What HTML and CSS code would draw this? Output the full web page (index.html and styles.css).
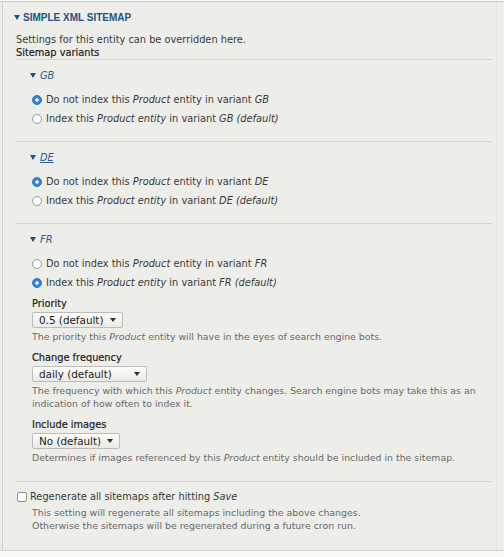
FILE: index.html
```html
<!DOCTYPE html>
<html lang="en">
<head>
<meta charset="utf-8">
<title>Simple XML Sitemap</title>
<link rel="stylesheet" href="styles.css">
</head>
<body>
<div class="frame">
  <div class="details">
    <div class="summary">
      <svg class="tri" width="6" height="5" viewBox="0 0 6 5"><path d="M0 0H6L3 5Z"/></svg>
      <span>SIMPLE XML SITEMAP</span>
    </div>
    <div class="content">
      <p class="intro">Settings for this entity can be overridden here.</p>
      <div class="legend">Sitemap variants</div>

      <div class="variant">
        <div class="vhead">
          <svg class="tri" width="6" height="5" viewBox="0 0 6 5"><path d="M0 0H6L3 5Z"/></svg>
          <em>GB</em>
        </div>
        <div class="options">
          <label class="opt"><input type="radio" name="gb" checked><span>Do not index this <em>Product</em> entity in variant <em>GB</em></span></label>
          <label class="opt"><input type="radio" name="gb"><span>Index this <em>Product entity</em> in variant <em>GB (default)</em></span></label>
        </div>
      </div>

      <div class="variant">
        <div class="vhead">
          <svg class="tri" width="6" height="5" viewBox="0 0 6 5"><path d="M0 0H6L3 5Z"/></svg>
          <em class="focus">DE</em>
        </div>
        <div class="options">
          <label class="opt"><input type="radio" name="de" checked><span>Do not index this <em>Product</em> entity in variant <em>DE</em></span></label>
          <label class="opt"><input type="radio" name="de"><span>Index this <em>Product entity</em> in variant <em>DE (default)</em></span></label>
        </div>
      </div>

      <div class="variant last">
        <div class="vhead">
          <svg class="tri" width="6" height="5" viewBox="0 0 6 5"><path d="M0 0H6L3 5Z"/></svg>
          <em>FR</em>
        </div>
        <div class="options">
          <label class="opt"><input type="radio" name="fr"><span>Do not index this <em>Product</em> entity in variant <em>FR</em></span></label>
          <label class="opt"><input type="radio" name="fr" checked><span>Index this <em>Product entity</em> in variant <em>FR (default)</em></span></label>
        </div>

        <div class="field">
          <div class="flabel">Priority</div>
          <div class="select w-priority"><span>0.5 (default)</span><svg class="arrow" width="6" height="4" viewBox="0 0 6 4"><path d="M0 0H6L3 4Z"/></svg></div>
          <div class="desc">The priority this <em>Product</em> entity will have in the eyes of search engine bots.</div>
        </div>

        <div class="field">
          <div class="flabel">Change frequency</div>
          <div class="select w-freq"><span>daily (default)</span><svg class="arrow" width="6" height="4" viewBox="0 0 6 4"><path d="M0 0H6L3 4Z"/></svg></div>
          <div class="desc">The frequency with which this <em>Product</em> entity changes. Search engine bots may take this as an<br>indication of how often to index it.</div>
        </div>

        <div class="field">
          <div class="flabel">Include images</div>
          <div class="select w-img"><span>No (default)</span><svg class="arrow" width="6" height="4" viewBox="0 0 6 4"><path d="M0 0H6L3 4Z"/></svg></div>
          <div class="desc">Determines if images referenced by this <em>Product</em> entity should be included in the sitemap.</div>
        </div>
      </div>

      <div class="regen">
        <label class="check"><input type="checkbox"><span>Regenerate all sitemaps after hitting <em>Save</em></span></label>
        <div class="desc regen-desc">This setting will regenerate all sitemaps including the above changes.<br>Otherwise the sitemaps will be regenerated during a future cron run.</div>
      </div>
    </div>
  </div>
</div>
</body>
</html>
```

FILE: styles.css
```css
html, body {
  margin: 0;
  padding: 0;
}

body {
  background: #fafaf9;
  font-family: "DejaVu Sans", "Liberation Sans", sans-serif;
  font-size: 9.8px;
  line-height: 13px;
  color: #3a3a3a;
}

.frame {
  margin-top: 1px;
  background: #edede9;
  border-top: 1px solid #cacac6;
  border-bottom: 1px solid #d2d2ce;
  padding-left: 2px;
}

.details {
  border-left: 1px solid #d0d0cc;
  border-right: 1px solid #e2e2de;
  margin-right: 7px;
  padding-bottom: 18px;
}

.summary {
  display: flex;
  align-items: center;
  height: 14px;
  padding: 8px 0 9px 11px;
  color: #1f5286;
  font-family: "Liberation Sans", "DejaVu Sans", sans-serif;
  font-size: 10px;
  font-weight: bold;
}

.tri {
  fill: #1f5286;
  flex: none;
}

.summary .tri {
  margin-right: 3px;
}

.content {
  padding: 0 4px 0 13px;
}

.intro {
  margin: 0;
}

.legend {
  color: #222;
  -webkit-text-stroke: 0.2px #222;
  border-bottom: 1px solid #d3d3cf;
}

.variant {
  padding: 9px 0 13px 14px;
  border-bottom: 1px solid #d3d3cf;
}

.variant.last {
  padding-bottom: 17px;
}

.vhead {
  display: flex;
  align-items: center;
  color: #2a5d8f;
}

.vhead .tri {
  margin-right: 4px;
}

.vhead em {
  font-style: italic;
}

.vhead .focus {
  text-decoration: underline;
}

.options {
  margin-top: 8px;
}

.opt {
  display: flex;
  align-items: center;
  height: 19px;
  padding-left: 2px;
}

.opt em, .check em, .desc em {
  font-style: italic;
}

input[type="radio"] {
  -webkit-appearance: none;
  appearance: none;
  width: 10px;
  height: 10px;
  margin: 0 4px 0 0;
  border: 1px solid #9c9c9c;
  border-radius: 50%;
  background: #fff;
  box-sizing: border-box;
  flex: none;
}

input[type="radio"]:checked {
  border-color: #2b6fc4;
  background: radial-gradient(circle, #ffffff 0 1.4px, #2f82de 2px);
}

.field {
  padding-left: 2px;
}

.flabel {
  margin-top: 5px;
  color: #222;
  -webkit-text-stroke: 0.2px #222;
}

.field + .field .flabel {
  margin-top: 8px;
}

.select {
  display: flex;
  align-items: center;
  justify-content: space-between;
  box-sizing: border-box;
  height: 16px;
  margin-top: 2px;
  padding: 0 6px 0 6px;
  border: 1px solid #bcbcb8;
  border-radius: 2px;
  background: linear-gradient(#fdfdfc, #e9e9e6);
  font-size: 10.4px;
  color: #222;
}

.arrow {
  fill: #333;
  flex: none;
}

.w-priority { width: 91px; }
.w-freq { width: 115px; }
.w-img { width: 88px; }

.desc {
  margin-top: 2px;
  font-size: 9.4px;
  color: #6a6a6a;
}

.regen {
  margin-top: 8px;
}

.check {
  display: flex;
  align-items: center;
  height: 13px;
  padding-left: 1px;
}

input[type="checkbox"] {
  -webkit-appearance: none;
  appearance: none;
  width: 10px;
  height: 10px;
  margin: 0 3px 0 0;
  border: 1px solid #8e8e8e;
  border-radius: 2px;
  background: #fff;
  box-sizing: border-box;
  flex: none;
}

.regen-desc {
  margin-top: 3px;
  padding-left: 16px;
}
```
